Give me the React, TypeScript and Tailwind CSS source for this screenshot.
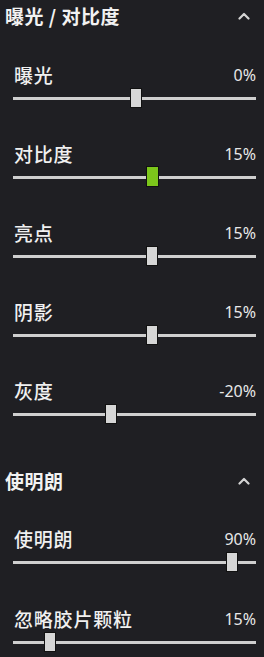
import React from "react";

type Row = { label: string; value: string; pos: number; active?: boolean };

const sec1: Row[] = [
  { label: "曝光", value: "0%", pos: 136 },
  { label: "对比度", value: "15%", pos: 152.5 },
  { label: "亮点", value: "15%", pos: 152 },
  { label: "阴影", value: "15%", pos: 152 },
  { label: "灰度", value: "-20%", pos: 111 },
];
const sec2: Row[] = [
  { label: "使明朗", value: "90%", pos: 232 },
  { label: "忽略胶片颗粒", value: "15%", pos: 50 },
];

const cjk = { fontFamily: '"Noto Sans CJK SC", "Noto Sans", sans-serif' };
const num = { fontFamily: '"Noto Sans", "Open Sans", sans-serif' };

function Chevron() {
  return (
    <svg width="12" height="8" viewBox="0 0 12 8" className="mr-[14px]">
      <polyline points="1.5,6.5 6,2 10.5,6.5" fill="none" stroke="#d4d4d4" strokeWidth="2.2" strokeLinecap="round" strokeLinejoin="round" />
    </svg>
  );
}

function Header({ title }: { title: string }) {
  return (
    <div className="flex h-8 items-center justify-between pl-[5px]">
      <span className="text-[19px] font-semibold tracking-[0.5px] text-[#f2f2f2]" style={cjk}>
        {title}
      </span>
      <Chevron />
    </div>
  );
}

function SliderRow({ r }: { r: Row }) {
  return (
    <div className="flex h-[79px] flex-col">
      <div className="flex h-6 items-center justify-between pl-[14px] pr-[8px]">
        <span className="text-[19px] font-medium tracking-[0.8px] text-[#f0f0f0]" style={cjk}>
          {r.label}
        </span>
        <span className="text-[16px] text-[#e8e8e8]" style={num}>
          {r.value}
        </span>
      </div>
      <div className="relative mt-px h-5 pl-[13px] pr-[8px]">
        <div className="flex h-full items-center">
          <div className="h-[3px] w-full bg-[#cfcfcf]" />
        </div>
        <div
          className={
            r.active
              ? "absolute top-[-1px] h-[21px] w-[13px] border border-[#111] bg-[#7cc61b]"
              : "absolute top-0 h-5 w-[12px] border border-[#111] bg-[#d6d6d6]"
          }
          style={{ left: r.pos - (r.active ? 6.5 : 6) }}
        />
      </div>
    </div>
  );
}

export default function App() {
  return (
    <div className="h-[657px] w-[264px] overflow-hidden bg-[#1f1f23]">
      <Header title="曝光 / 对比度" />
      <div className="h-[31px]" />
      {sec1.map((r, i) => (
        <SliderRow key={r.label} r={{ ...r, active: i === 1 }} />
      ))}
      <div className="h-[7px]" />
      <Header title="使明朗" />
      <div className="h-[30px]" />
      <div className="flex flex-col gap-px">
        {sec2.map((r) => (
          <SliderRow key={r.label} r={r} />
        ))}
      </div>
    </div>
  );
}
